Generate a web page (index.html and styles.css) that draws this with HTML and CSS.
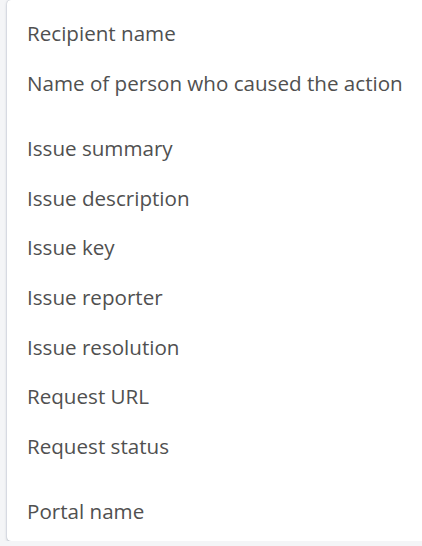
FILE: index.html
```html
<!DOCTYPE html>
<html>
<head>
<meta charset="utf-8">
<link rel="stylesheet" href="styles.css">
</head>
<body>
<div class="menu">
  <div class="group">
    <div class="item">Recipient name</div>
    <div class="item">Name of person who caused the action</div>
  </div>
  <div class="group">
    <div class="item">Issue summary</div>
    <div class="item">Issue description</div>
    <div class="item">Issue key</div>
    <div class="item">Issue reporter</div>
    <div class="item">Issue resolution</div>
    <div class="item">Request URL</div>
    <div class="item">Request status</div>
  </div>
  <div class="group">
    <div class="item">Portal name</div>
  </div>
</div>
</body>
</html>
```
FILE: styles.css
```css
html, body {
  margin: 0;
  padding: 0;
  background: #f4f5f7;
  overflow: hidden;
}
.menu {
  margin-left: 7px;
  height: 541px;
  box-sizing: border-box;
  background: #ffffff;
  border-radius: 4px 0 0 4px;
  box-shadow: 0 1px 3px rgba(9, 30, 66, 0.25), 0 0 1px rgba(9, 30, 66, 0.31);
  padding-top: 9px;
  display: flex;
  flex-direction: column;
  gap: 16px;
  font-family: "Open Sans", "Noto Sans", sans-serif;
  font-size: 20.6px;
  color: #505050;
}
.item {
  height: 49.6px;
  line-height: 49.6px;
  padding-left: 20px;
  white-space: nowrap;
}
```
